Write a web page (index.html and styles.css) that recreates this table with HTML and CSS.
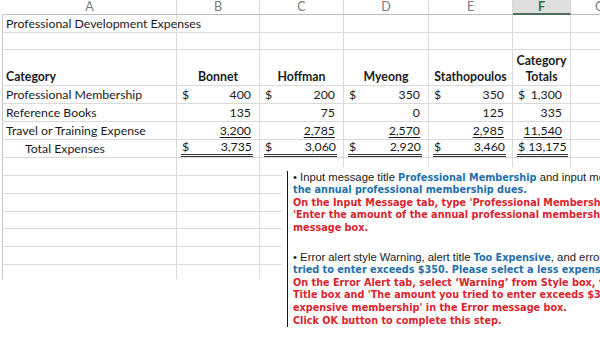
FILE: index.html
```html
<!DOCTYPE html>
<html>
<head>
<meta charset="utf-8">
<link rel="stylesheet" href="styles.css">
</head>
<body>
<div class="sheet">
  <div class="sheet-grid">
    <!-- header row -->
    <div class="hd hd-a">A</div>
    <div class="hd">B</div>
    <div class="hd">C</div>
    <div class="hd">D</div>
    <div class="hd">E</div>
    <div class="hd hd-sel">F</div>
    <div class="hd hd-last">G</div>

    <!-- row 1 -->
    <div class="c ca"><span class="title">Professional Development Expenses</span></div>
    <div class="c"></div><div class="c"></div><div class="c"></div><div class="c"></div><div class="c"></div><div class="c cg"></div>

    <!-- row 2 -->
    <div class="c ca"></div>
    <div class="c"></div><div class="c"></div><div class="c"></div><div class="c"></div><div class="c"></div><div class="c cg"></div>

    <!-- row 3 -->
    <div class="c ca b">Category</div>
    <div class="c b ctr">Bonnet</div>
    <div class="c b ctr">Hoffman</div>
    <div class="c b ctr">Myeong</div>
    <div class="c b ctr">Stathopoulos</div>
    <div class="c b ctr two">Category<br>Totals</div>
    <div class="c cg"></div>

    <!-- row 4 -->
    <div class="c ca">Professional Membership</div>
    <div class="c acct"><span>$</span><span>400</span></div>
    <div class="c acct"><span>$</span><span>200</span></div>
    <div class="c acct"><span>$</span><span>350</span></div>
    <div class="c acct"><span>$</span><span>350</span></div>
    <div class="c acct"><span>$</span><span>1,300</span></div>
    <div class="c cg"></div>

    <!-- row 5 -->
    <div class="c ca">Reference Books</div>
    <div class="c acct"><span></span><span>135</span></div>
    <div class="c acct"><span></span><span>75</span></div>
    <div class="c acct"><span></span><span>0</span></div>
    <div class="c acct"><span></span><span>125</span></div>
    <div class="c acct"><span></span><span>335</span></div>
    <div class="c cg"></div>

    <!-- row 6 -->
    <div class="c ca">Travel or Training Expense</div>
    <div class="c acct"><span></span><span class="ul">3,200</span></div>
    <div class="c acct"><span></span><span class="ul">2,785</span></div>
    <div class="c acct"><span></span><span class="ul">2,570</span></div>
    <div class="c acct"><span></span><span class="ul">2,985</span></div>
    <div class="c acct"><span></span><span class="ul">11,540</span></div>
    <div class="c cg"></div>

    <!-- row 7 -->
    <div class="c ca indent">Total Expenses</div>
    <div class="c tot-cell"><div class="tot"><span>$</span><span>3,735</span></div></div>
    <div class="c tot-cell"><div class="tot"><span>$</span><span>3,060</span></div></div>
    <div class="c tot-cell"><div class="tot"><span>$</span><span>2,920</span></div></div>
    <div class="c tot-cell"><div class="tot"><span>$</span><span>3,460</span></div></div>
    <div class="c tot-cell"><div class="tot tight"><span>$</span><span>13,175</span></div></div>
    <div class="c cg"></div>

    <!-- empty rows 8-13 -->
    <div class="c ca"></div><div class="c"></div><div class="c"></div><div class="c"></div><div class="c"></div><div class="c"></div><div class="c cg"></div>
    <div class="c ca"></div><div class="c"></div><div class="c"></div><div class="c"></div><div class="c"></div><div class="c"></div><div class="c cg"></div>
    <div class="c ca"></div><div class="c"></div><div class="c"></div><div class="c"></div><div class="c"></div><div class="c"></div><div class="c cg"></div>
    <div class="c ca"></div><div class="c"></div><div class="c"></div><div class="c"></div><div class="c"></div><div class="c"></div><div class="c cg"></div>
    <div class="c ca"></div><div class="c"></div><div class="c"></div><div class="c"></div><div class="c"></div><div class="c"></div><div class="c cg"></div>
    <div class="c ca"></div><div class="c"></div><div class="c"></div><div class="c"></div><div class="c"></div><div class="c"></div><div class="c cg"></div>

    <!-- partial row 14 -->
    <div class="c ca nb"></div><div class="c nb"></div><div class="c nb"></div><div class="c nb"></div><div class="c nb"></div><div class="c nb"></div><div class="c cg nb"></div>
  </div>
</div>

<div class="note">
  <div class="note-body">
    <div class="para">
      <div class="line"><span class="reg">• Input message title </span><span class="blue">Professional Membership</span><span class="reg"> and input message </span><span class="blue">Enter the amount of</span></div>
      <div class="line"><span class="blue">the annual professional membership dues.</span></div>
      <div class="line"><span class="red">On the Input Message tab, type 'Professional Membership' in the Title box and</span></div>
      <div class="line"><span class="red">'Enter the amount of the annual professional membership dues.' in the Input</span></div>
      <div class="line"><span class="red">message box.</span></div>
    </div>
    <div class="para">
      <div class="line"><span class="reg">• Error alert style Warning, alert title </span><span class="blue">Too Expensive</span><span class="reg">, and error message </span><span class="blue">The amount you</span></div>
      <div class="line"><span class="blue">tried to enter exceeds $350. Please select a less expensive membership.</span></div>
      <div class="line"><span class="red">On the Error Alert tab, select ‘Warning’ from Style box, type 'Too Expensive' in the</span></div>
      <div class="line"><span class="red">Title box and 'The amount you tried to enter exceeds $350. Please select a less</span></div>
      <div class="line"><span class="red">expensive membership' in the Error message box.</span></div>
      <div class="line"><span class="red">Click OK button to complete this step.</span></div>
    </div>
  </div>
</div>
</body>
</html>
```

FILE: styles.css
```css
html, body {
  margin: 0;
  padding: 0;
  overflow: hidden;
  background: #ffffff;
}

body {
  width: 600px;
  height: 340px;
  position: relative;
  font-family: Lato, "Open Sans", sans-serif;
  color: #1b1b1b;
}

.sheet {
  padding-left: 2px;
}

.sheet-grid {
  display: grid;
  grid-template-columns: 175px 83px 84px 85px 84px 58px 60px;
  grid-template-rows: 15px 18px 17px 36px 18px 18px 18px 18px 18px 18px 18px 17px 18px 18px 14px;
  font-size: 12.3px;
}

.hd {
  box-sizing: border-box;
  border-right: 1px solid #d6d6d6;
  border-bottom: 1px solid #bdbdbd;
  color: #7a7a7a;
  font-size: 12.5px;
  line-height: 14px;
  text-align: center;
}

.hd-a {
  border-left: 1px solid transparent;
}

.hd-sel {
  background: #dedede;
  color: #217346;
  font-weight: 700;
  border-bottom: 2px solid #4d6e58;
  line-height: 13px;
}

.hd-last {
  border-right: none;
  text-align: left;
  padding-left: 24px;
}

.c {
  box-sizing: border-box;
  border-right: 1px solid #dadada;
  border-bottom: 1px solid #dadada;
  display: flex;
  align-items: flex-end;
  line-height: 16px;
  padding: 0 3px 0 3px;
  white-space: nowrap;
  min-width: 0;
}

.ca {
  border-left: 1px solid #c4c4c4;
}

.cg {
  border-right: none;
}

.nb {
  border-bottom: none;
}

.title {
  position: relative;
  z-index: 1;
}

.b {
  font-weight: 700;
}

.ctr {
  justify-content: center;
  text-align: center;
}

.two {
  line-height: 16px;
}

.indent {
  padding-left: 22px;
}

.acct {
  justify-content: space-between;
  padding: 0 8px 0 5px;
}

.ul {
  text-decoration: underline;
  text-underline-offset: 2px;
  text-decoration-thickness: 1px;
}

.tot-cell {
  padding: 0 6px 0 4px;
}

.tot {
  flex: 1;
  display: flex;
  justify-content: space-between;
  padding: 0 1px 0 1px;
  border-bottom: 3px double #333333;
  line-height: 14px;
}

.tot.tight {
  justify-content: flex-start;
  gap: 3px;
}

.note {
  position: absolute;
  left: 282px;
  top: 167px;
  width: 318px;
  height: 173px;
  box-sizing: border-box;
  background: #ffffff;
  padding: 5px 0 0 5px;
  overflow: hidden;
}

.note-body {
  border-left: 1px solid #161616;
  height: 156px;
  padding-left: 5px;
  white-space: nowrap;
  font-size: 9px;
}

.para {
  margin: -1px 0 17px 0;
}

.line {
  height: 12.8px;
  line-height: 12.8px;
}

.reg {
  font-family: "Liberation Sans", Arial, sans-serif;
  font-size: 11.3px;
  line-height: 12.8px;
  color: #222222;
}

.blue,
.red {
  font-family: "DejaVu Sans", Verdana, sans-serif;
  font-weight: 700;
  font-size: 9.7px;
  line-height: 12.8px;
}

.blue {
  color: #2270ad;
}

.red {
  color: #dc2430;
}
```
